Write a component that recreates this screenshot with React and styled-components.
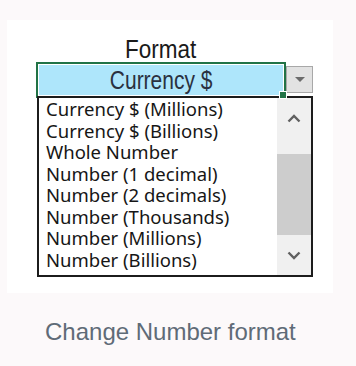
import styled, { createGlobalStyle } from "styled-components";

const GlobalStyle = createGlobalStyle`
  html, body {
    margin: 0;
    padding: 0;
    background: #fcf9fa;
  }
`;

const items = [
  "Currency $ (Millions)",
  "Currency $ (Billions)",
  "Whole Number",
  "Number (1 decimal)",
  "Number (2 decimals)",
  "Number (Thousands)",
  "Number (Millions)",
  "Number (Billions)",
];

export default function App() {
  return (
    <>
      <GlobalStyle />
      <Page>
        <Card>
          <Title>
            <Narrow $scale={0.9}>Format</Narrow>
          </Title>
          <Control>
            <CellRow>
              <Cell>
                <CellText>
                  <Narrow $scale={0.84}>Currency $</Narrow>
                </CellText>
                <FillHandle />
              </Cell>
              <DropButton>
                <svg width="10" height="6" viewBox="0 0 10 6">
                  <path d="M0 0 L10 0 L5 5 Z" fill="#6b6b6b" />
                </svg>
              </DropButton>
            </CellRow>
            <ListBox>
              <Options>
                {items.map((item, index) => (
                  <Option key={index}>{item}</Option>
                ))}
              </Options>
              <ScrollBar>
                <ArrowBox>
                  <svg width="14" height="9" viewBox="0 0 14 9">
                    <path d="M1.5 7.5 L7 2 L12.5 7.5" fill="none" stroke="#606060" strokeWidth="2.4" />
                  </svg>
                </ArrowBox>
                <Track>
                  <Thumb />
                </Track>
                <ArrowBox>
                  <svg width="14" height="9" viewBox="0 0 14 9">
                    <path d="M1.5 1.5 L7 7 L12.5 1.5" fill="none" stroke="#606060" strokeWidth="2.4" />
                  </svg>
                </ArrowBox>
              </ScrollBar>
            </ListBox>
          </Control>
        </Card>
        <Caption>Change Number format</Caption>
      </Page>
    </>
  );
}

const Page = styled.div`
  width: 356px;
  height: 366px;
  padding-top: 20px;
  box-sizing: border-box;
`;

const Card = styled.div`
  margin-left: 7px;
  width: 326px;
  height: 273px;
  background: #ffffff;
  padding: 16px 0 0 29px;
  box-sizing: border-box;
`;

const Narrow = styled.span`
  display: inline-block;
  transform: scaleX(${(p) => p.$scale});
  transform-origin: center;
`;

const Title = styled.div`
  width: 250px;
  text-align: center;
  font-family: "Liberation Sans", Arial, sans-serif;
  font-size: 25px;
  line-height: 26px;
  color: #1a1a1a;
`;

const Control = styled.div`
  width: 277px;
  display: flex;
  flex-direction: column;
`;

const CellRow = styled.div`
  display: flex;
  align-items: flex-start;
`;

const Cell = styled.div`
  position: relative;
  width: 250px;
  height: 36px;
  box-sizing: border-box;
  border: 2px solid #217346;
  box-shadow: inset 0 0 0 1px #ffffff;
  background: #aee6fb;
  display: flex;
  align-items: center;
  justify-content: center;
`;

const CellText = styled.span`
  font-family: "Liberation Sans", Arial, sans-serif;
  font-size: 25px;
  color: #2a3140;
`;

const FillHandle = styled.div`
  position: absolute;
  right: -3px;
  bottom: -3px;
  width: 6px;
  height: 6px;
  background: #217346;
  border: 1px solid #ffffff;
  z-index: 2;
`;

const DropButton = styled.div`
  margin-top: 4px;
  width: 27px;
  height: 27px;
  box-sizing: border-box;
  background: #e2e2e2;
  border: 1px solid #a8a8a8;
  display: flex;
  align-items: center;
  justify-content: center;
`;

const ListBox = styled.div`
  position: relative;
  z-index: 1;
  margin-top: -2px;
  margin-left: 1px;
  width: 276px;
  height: 181px;
  box-sizing: border-box;
  border: 2px solid #1c1c1c;
  background: #ffffff;
  display: flex;
`;

const Options = styled.div`
  flex: 1;
  padding: 0 0 0 7px;
`;

const Option = styled.div`
  font-family: "Noto Sans", "Open Sans", sans-serif;
  font-size: 18.5px;
  line-height: 21.5px;
  color: #161616;
  white-space: nowrap;
`;

const ScrollBar = styled.div`
  width: 34px;
  background: #f0f0f0;
  display: flex;
  flex-direction: column;
`;

const ArrowBox = styled.div`
  height: 40px;
  display: flex;
  align-items: center;
  justify-content: center;
`;

const Track = styled.div`
  flex: 1;
  display: flex;
  flex-direction: column;
  justify-content: flex-end;
`;

const Thumb = styled.div`
  height: 81px;
  background: #cdcdcd;
`;

const Caption = styled.div`
  margin: 25px 0 0 45px;
  font-family: "Liberation Sans", Arial, sans-serif;
  font-size: 24px;
  color: #5f6b77;
`;
